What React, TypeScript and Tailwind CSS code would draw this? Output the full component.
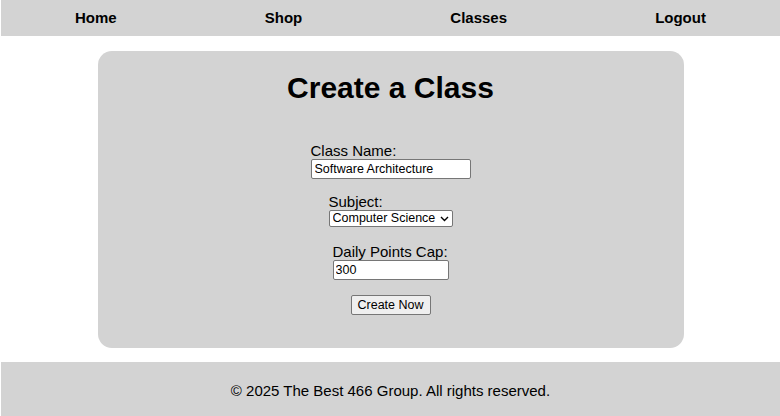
export default function App() {
  const links = ['Home', 'Shop', 'Classes', 'Logout']
  return (
    <div className="flex min-h-[416px] flex-col bg-white pl-px font-['Liberation_Sans',Arial,sans-serif] text-black">
      <nav className="flex h-[36px] items-center justify-around bg-[#d3d3d3] pt-px text-[15px] font-bold">
        {links.map((l) => (
          <a key={l} href="#" className="text-black">{l}</a>
        ))}
      </nav>

      <main className="mx-auto mt-[15px] h-[297px] w-[586px] rounded-[14px] bg-[#d3d3d3] pt-[19px] text-center">
        <h1 className="text-[30px] font-bold leading-[35px]">Create a Class</h1>
        <form className="mt-[37px] flex flex-col items-center text-[15px]" onSubmit={(e) => e.preventDefault()}>
          <div className="mb-[14px] inline-flex flex-col items-start">
            <label className="leading-[17px]">Class Name:</label>
            <input
              defaultValue="Software Architecture"
              className="h-[20px] w-[160px] rounded-[2px] border border-[#767676] bg-white px-[3px] text-[12.5px] outline-none"
            />
          </div>
          <div className="mb-[16px] inline-flex flex-col items-start">
            <label className="leading-[17px]">Subject:</label>
            <div className="relative">
              <select
                defaultValue="cs"
                className="block h-[17px] w-[124px] appearance-none rounded-[2px] border border-[#767676] bg-white pl-[3px] text-[12.5px] leading-[15px] outline-none"
              >
                <option value="cs">Computer Science</option>
                <option value="math">Mathematics</option>
              </select>
              <svg
                className="pointer-events-none absolute right-[4px] top-[6px]"
                width="9"
                height="6"
                viewBox="0 0 9 6"
              >
                <path d="M1 1 L4.5 4.5 L8 1" fill="none" stroke="#000" strokeWidth="1.4" />
              </svg>
            </div>
          </div>
          <div className="mb-[15px] inline-flex flex-col items-start">
            <label className="leading-[17px]">Daily Points Cap:</label>
            <input
              defaultValue="300"
              className="h-[20px] w-[116px] rounded-[2px] border border-[#767676] bg-white px-[2px] text-[12.5px] outline-none"
            />
          </div>
          <button
            type="submit"
            className="h-[20px] w-[80px] rounded-[2px] border border-[#767676] bg-[#efefef] text-[12.5px] leading-[16px]"
          >
            Create Now
          </button>
        </form>
      </main>

      <footer className="mt-[14px] flex h-[54px] items-center justify-center bg-[#d3d3d3] pt-[4px] text-[15px]">
        © 2025 The Best 466 Group. All rights reserved.
      </footer>
    </div>
  )
}
